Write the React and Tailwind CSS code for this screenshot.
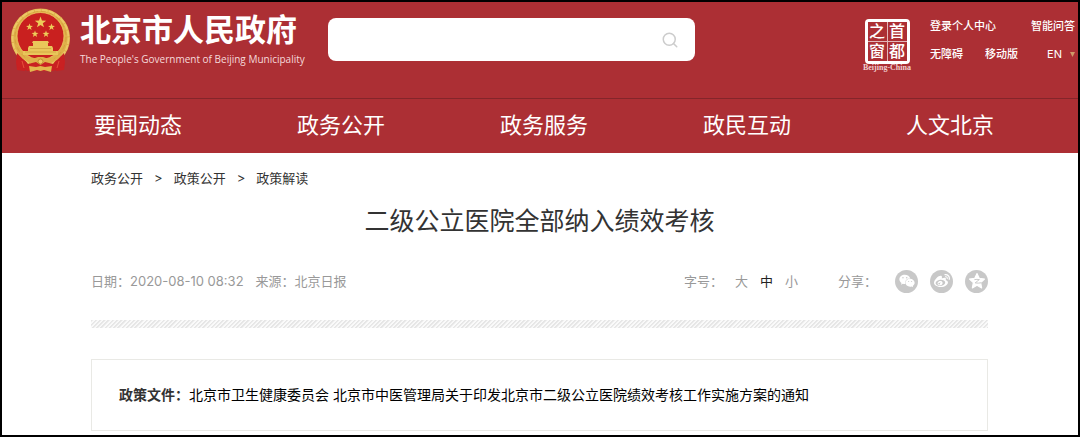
import { useState } from "react";
import { Search } from "lucide-react";
import { FaWeibo, FaWeixin } from "react-icons/fa";

const NAV = ["要闻动态", "政务公开", "政务服务", "政民互动", "人文北京"];
const CRUMBS = ["政务公开", "政策公开", "政策解读"];
const SIZES = ["大", "中", "小"];

export default function App() {
  return (
    <div className="min-h-screen border-2 border-black bg-white font-['Inter','Noto_Sans_CJK_SC',sans-serif] text-[#333]">
      <header className="bg-[#ac2f34] text-white">
        <TopBar />
        <nav className="flex h-[55px] items-center justify-between border-t border-[#84252a] pr-[84px] pb-[2px] pl-[92px]">
          {NAV.map((item) => (
            <a key={item} href="#" className="text-[22px] leading-[30px]">
              {item}
            </a>
          ))}
        </nav>
      </header>

      <main className="pr-[90px] pl-[89px]">
        <Breadcrumb />
        <h1 className="mt-4 text-center text-[25px] leading-[36px]">二级公立医院全部纳入绩效考核</h1>
        <ArticleMeta />
        <div className="mt-[27px] h-2 bg-[repeating-linear-gradient(135deg,#e6e6e6_0px,#e6e6e6_1px,#fafafa_2px,#fafafa_3px)]" />
        <section className="mt-[31px] border border-[#e9e9e5] px-[27px] py-[23px] text-[14px] leading-[24px]">
          <span className="font-bold">政策文件：</span>
          <a href="#" className="text-black">
            北京市卫生健康委员会 北京市中医管理局关于印发北京市二级公立医院绩效考核工作实施方案的通知
          </a>
        </section>
      </main>
    </div>
  );
}

function TopBar() {
  return (
    <div className="flex h-24 items-start pr-[3px] pl-2">
      <a href="#" className="flex shrink-0 pt-[5px]">
        <Emblem />
        <span className="ml-2 flex w-[220px] flex-col pt-[2px]">
          <span className="text-[31px] leading-[42px] font-bold whitespace-nowrap">北京市人民政府</span>
          <span className="font-['Open_Sans',sans-serif] text-[10px] leading-4 font-medium whitespace-nowrap text-[#f6dadb]">
            The People's Government of Beijing Municipality
          </span>
        </span>
      </a>

      <form
        role="search"
        className="mt-4 ml-7 flex h-[43px] w-[34.5%] items-center rounded-lg bg-white pr-4 pl-4"
        onSubmit={(e) => e.preventDefault()}
      >
        <input type="text" aria-label="搜索" className="min-w-0 flex-1 text-sm text-[#333] outline-none" />
        <button type="submit" aria-label="搜索" className="text-[#ccc]">
          <Search size={18} strokeWidth={2} />
        </button>
      </form>

      <Seal />

      <div className="ml-[18px] flex w-[145px] flex-col gap-3 pt-4 text-[11px] leading-4 font-medium whitespace-nowrap">
        <div className="flex justify-between">
          <a href="#">登录个人中心</a>
          <a href="#">智能问答</a>
        </div>
        <div className="flex">
          <a href="#">无障碍</a>
          <a href="#" className="ml-[22px]">移动版</a>
          <button type="button" className="ml-auto flex items-center gap-2 font-normal">
            EN
            <svg width="5" height="5" viewBox="0 0 5 5" fill="#cf9a68">
              <path d="M0 0h5L2.5 5z" />
            </svg>
          </button>
        </div>
      </div>
    </div>
  );
}

function Seal() {
  return (
    <a href="#" className="mt-[17px] ml-auto flex w-[50px] shrink-0 flex-col items-center">
      <span className="grid size-[45px] grid-cols-2 grid-rows-2 gap-px rounded-sm border-[3px] border-white bg-[#e3b6b8] text-center text-[16px] leading-[18px] font-medium">
        {["之", "首", "窗", "都"].map((c) => (
          <span key={c} className="bg-[#ac2f34]">{c}</span>
        ))}
      </span>
      <span className="font-['Liberation_Serif',serif] text-[8px] leading-[8px] font-bold whitespace-nowrap text-[#f0cfd0]">
        Beijing-China
      </span>
    </a>
  );
}

function Breadcrumb() {
  return (
    <nav className="flex gap-[11px] pt-4 text-[13px] leading-[18px]">
      {CRUMBS.map((c, i) => (
        <span key={c} className="flex gap-[11px]">
          {i > 0 && <span>&gt;</span>}
          <a href="#">{c}</a>
        </span>
      ))}
    </nav>
  );
}

function ArticleMeta() {
  const [size, setSize] = useState("中");

  return (
    <div className="mt-[30px] flex h-6 items-center text-[13px] leading-5 whitespace-nowrap text-[#999]">
      <span>日期：2020-08-10 08:32</span>
      <span className="ml-3">来源：北京日报</span>
      <span className="ml-auto">字号：</span>
      <div className="ml-3 flex gap-3">
        {SIZES.map((s) => (
          <button key={s} type="button" onClick={() => setSize(s)} className={s === size ? "text-[#222]" : ""}>
            {s}
          </button>
        ))}
      </div>
      <span className="ml-10">分享：</span>
      <div className="ml-[18px] flex gap-3">
        <ShareButton label="微信">
          <FaWeixin size={16} />
        </ShareButton>
        <ShareButton label="微博">
          <FaWeibo size={16} />
        </ShareButton>
        <ShareButton label="QQ空间">
          <svg width="18" height="18" viewBox="0 0 24 24">
            <path
              d="M12 2l3 6.400 7 .9-5.100 4.900 1.300 7L12 17.800l-6.200 3.400 1.300-7L2 9.300l7-.9z"
              fill="currentColor"
              stroke="currentColor"
              strokeWidth="1.500"
              strokeLinejoin="round"
            />
            <path d="M8.500 10.200c2.500-.5 4.500-.5 6.700-.1L9.500 14.500c3 .5 5.500.5 8.500-.2" fill="none" stroke="#c8c8c8" strokeWidth="1.300" />
          </svg>
        </ShareButton>
      </div>
    </div>
  );
}

function ShareButton({ label, children }) {
  return (
    <button type="button" aria-label={label} className="flex size-[23px] items-center justify-center rounded-full bg-[#c8c8c8] text-white">
      {children}
    </button>
  );
}

function Star({ x, y, r }) {
  return (
    <path
      transform={`translate(${x} ${y}) scale(${r})`}
      d="M0-1L.24-.32.95-.31.38.12.59.81 0 .4-.59.81-.38.12-.95-.31-.24-.32z"
      fill="#edcb58"
    />
  );
}

function Emblem() {
  return (
    <svg width="62" height="66" viewBox="0 0 62 66">
      {/* wreath */}
      <circle cx="30.500" cy="31" r="29.500" fill="#dfb04a" />
      <circle cx="30.500" cy="31" r="28" fill="none" stroke="#ecc866" strokeWidth="2" strokeDasharray="6 1" />
      <circle cx="30.500" cy="30" r="25.500" fill="none" stroke="#cd9836" strokeWidth=".6" strokeDasharray="5 3" />
      <circle cx="30.500" cy="29" r="23.500" fill="#c9201f" stroke="#efca61" strokeWidth=".8" />
      <Star x={30.5} y={15.5} r={6} />
      <Star x={19.5} y={20} r={3.6} />
      <Star x={41.5} y={20} r={3.6} />
      <Star x={25} y={27} r={3.6} />
      <Star x={36} y={27} r={3.6} />
      {/* gate */}
      <path d="M23 34h15l1 2H22zM23 36h15v3H23zM19 39h23l1 2v3h5v4H13v-4h5v-3z" fill="#e9c65a" />
      <path d="M15 45h31M20 41.500h21" stroke="#c18a31" strokeWidth=".5" />
      {/* gear */}
      <path d="M16 50q6 2 9 1l3-1h5l3 1q3 1 9-1l-3 5-8 3h-7l-8-3z" fill="#dfb04a" />
      <circle cx="30.500" cy="54.500" r="2.500" fill="#edcb64" stroke="#b98328" strokeWidth=".8" />
      {/* drapery and knot */}
      <path d="M7 46l9 9-1 9-8-1-1-8zM54 46l-9 9 1 9 8-1 1-8z" fill="#c92122" />
      <path d="M8 51q7 1 10 6l8-2 4.500 3 4.500-3 8 2q3-5 10-6l1 9q-6 0-10 4H17q-4-4-10-4z" fill="#c92122" />
      <path d="M12 54l2 7M49 54l-2 7" stroke="#e5513a" strokeWidth="1" />
      <path d="M19 59l7 1 4.500-1 4.500 1 7-1-1 6-7-2-3.500 1-3.500-1-7 2z" fill="#e2b84e" />
    </svg>
  );
}
